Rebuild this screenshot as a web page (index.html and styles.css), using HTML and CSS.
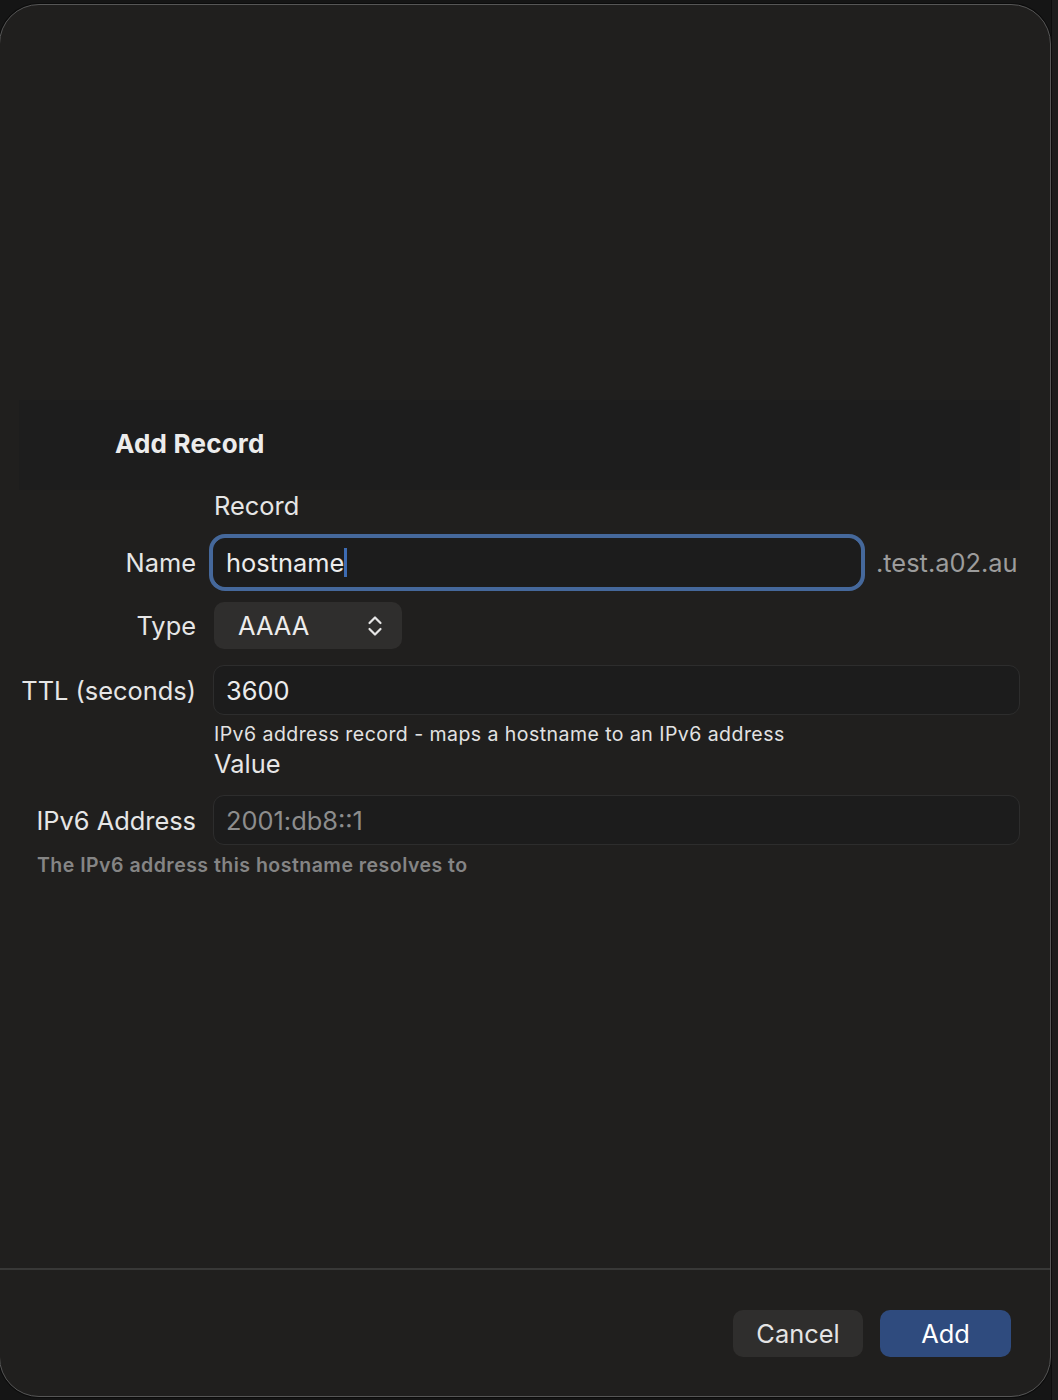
FILE: index.html
```html
<!DOCTYPE html>
<html lang="en">
<head>
<meta charset="utf-8">
<title>Add Record</title>
<link rel="stylesheet" href="styles.css">
</head>
<body>
<div class="screen">
  <div class="sheet">
    <div class="spacer"></div>
    <div class="header">
      <h1 class="title">Add Record</h1>
    </div>
    <div class="form">
      <div class="row section"><span></span><div class="section-label">Record</div></div>
      <div class="row row-name">
        <label class="label">Name</label>
        <div class="name-field">
          <div class="input focus"><span class="value">hostname</span><span class="caret"></span></div>
          <span class="suffix">.test.a02.au</span>
        </div>
      </div>
      <div class="row row-type">
        <label class="label">Type</label>
        <div class="field-wrap">
          <div class="select">
            <span class="value">AAAA</span>
            <svg class="chevrons" width="16" height="24" viewBox="0 0 16 24" aria-hidden="true">
              <path d="M2.5 9 L8 3.5 L13.5 9" fill="none" stroke="#e6e6e6" stroke-width="2.2" stroke-linecap="round" stroke-linejoin="round"/>
              <path d="M2.5 15 L8 20.5 L13.5 15" fill="none" stroke="#e6e6e6" stroke-width="2.2" stroke-linecap="round" stroke-linejoin="round"/>
            </svg>
          </div>
        </div>
      </div>
      <div class="row row-ttl">
        <label class="label">TTL (seconds)</label>
        <div class="input"><span class="value">3600</span></div>
      </div>
      <div class="row row-help"><span></span><div class="help">IPv6 address record - maps a hostname to an IPv6 address</div></div>
      <div class="row row-value"><span></span><div class="section-label">Value</div></div>
      <div class="row row-ipv6">
        <label class="label">IPv6 Address</label>
        <div class="input"><span class="placeholder">2001:db8::1</span></div>
      </div>
      <div class="hint">The IPv6 address this hostname resolves to</div>
    </div>
    <div class="footer">
      <button class="btn btn-cancel">Cancel</button>
      <button class="btn btn-add">Add</button>
    </div>
  </div>
  <div class="side"></div>
</div>
</body>
</html>
```
FILE: styles.css
```css
* { box-sizing: border-box; }
html, body {
  margin: 0;
  padding: 0;
  background: #151515;
}
body {
  font-family: Inter, "Noto Sans", "DejaVu Sans", sans-serif;
  color: #e6e6e6;
  width: 1058px;
  height: 1400px;
  overflow: hidden;
}
.screen {
  display: flex;
  align-items: flex-start;
  height: 1400px;
}
.sheet {
  margin-top: 4px;
  margin-left: -1px;
  width: 1052px;
  height: 1393px;
  flex: none;
  background: #201f1e;
  border: 1px solid #565656;
  box-shadow: 0 0 0 1px #0c0c0c;
  border-radius: 40px;
  display: flex;
  flex-direction: column;
  overflow: hidden;
}
.side {
  flex: 1;
  height: 1400px;
  background: #1c1c1c;
  border-left: 1px solid #0c0c0c;
}
.spacer {
  height: 395px;
  flex: none;
}
.header {
  height: 90px;
  margin: 0 30px 0 19px;
  background: #1d1d1d;
  display: flex;
  align-items: center;
  padding-left: 96px;
}
.title {
  margin: 0;
  font-size: 26px;
  font-weight: 700;
  color: #ececec;
  letter-spacing: 0.2px;
  position: relative;
  top: -2px;
}
.form {
  flex: 1;
  padding: 1px 30px 0 1px;
}
.row {
  display: grid;
  grid-template-columns: 195px 1fr;
  column-gap: 17px;
  align-items: center;
}
.label {
  text-align: right;
  font-size: 25.4px;
  color: #e6e6e6;
}
.section-label {
  font-size: 25.4px;
  line-height: 30px;
  color: #e6e6e6;
  padding-left: 1px;
}
.row-name { margin-top: 17px; }
.name-field {
  display: flex;
  align-items: center;
  gap: 15px;
}
.input {
  height: 50px;
  background: #1c1c1c;
  border: 1px solid #2d2d2d;
  border-radius: 11px;
  display: flex;
  align-items: center;
  padding-left: 12px;
  font-size: 25.4px;
}
.input.focus {
  flex: none;
  width: 648px;
  height: 49px;
  border: 1px solid #1c1c1c;
  box-shadow: 0 0 0 4px #45689b;
  border-radius: 12px;
}
.value { color: #ececec; }
.caret {
  display: inline-block;
  width: 3px;
  height: 29px;
  background: #3d6bb2;
  margin-left: 0;
}
.suffix {
  font-size: 25.4px;
  color: #9c9c9c;
}
.row-type { margin-top: 15px; }
.field-wrap { padding-left: 1px; }
.select {
  width: 188px;
  height: 47px;
  background: #2f2e2d;
  border-radius: 10px;
  display: flex;
  align-items: center;
  justify-content: space-between;
  padding: 0 19px 0 24px;
  font-size: 25.4px;
}
.chevrons { display: block; }
.row-ttl { margin-top: 16px; }
.row-help { margin-top: 7px; }
.help {
  font-size: 19.5px;
  line-height: 24px;
  color: #e2e2e2;
  padding-left: 1px;
  letter-spacing: 0.45px;
}
.row-value { margin-top: 3px; }
.row-ipv6 { margin-top: 16px; }
.placeholder { color: #8d8d8d; }
.hint {
  margin-top: 8px;
  padding-left: 36px;
  font-size: 19.5px;
  line-height: 24px;
  font-weight: 600;
  color: #858585;
  letter-spacing: 0.48px;
}
.footer {
  height: 128px;
  flex: none;
  border-top: 2px solid #383837;
  display: flex;
  justify-content: flex-end;
  align-items: flex-start;
  gap: 17px;
  padding: 40px 39px 0 0;
}
.btn {
  height: 47px;
  width: 130px;
  border: none;
  border-radius: 10px;
  font-family: inherit;
  font-size: 25.4px;
  cursor: pointer;
}
.btn-cancel {
  background: #2f2e2d;
  color: #e4e4e4;
}
.btn-add {
  width: 131px;
  background: #2f4b7e;
  color: #ffffff;
}
```
